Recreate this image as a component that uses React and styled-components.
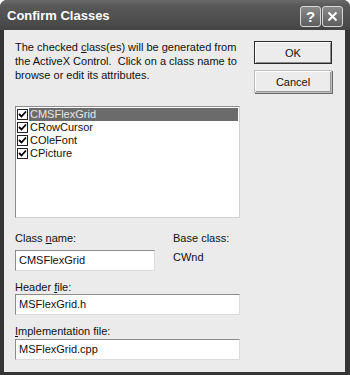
import React from "react";
import styled, { createGlobalStyle } from "styled-components";

const Global = createGlobalStyle`
  html, body { margin: 0; padding: 0; background: #ffffff; }
  body { font-family: "Liberation Sans", Arial, sans-serif; }
`;

const Window = styled.div`
  width: 350px;
  height: 375px;
  box-sizing: border-box;
  display: flex;
  flex-direction: column;
  background: #353535;
  border-radius: 7px 7px 0 0;
  overflow: hidden;
`;

const TitleBar = styled.div`
  height: 30px;
  flex: none;
  display: flex;
  align-items: center;
  padding: 0 7px 0 7px;
  background: linear-gradient(#6a6a6a 0%, #585858 20%, #4d4d4d 70%, #444 100%);
`;

const Title = styled.div`
  color: #ffffff;
  font: bold 13px "Liberation Sans", Arial, sans-serif;
  margin-top: 1px;
`;

const TitleButtons = styled.div`
  margin-left: auto;
  display: flex;
  gap: 1px;
  margin-top: 3px;
`;

const CapButton = styled.div`
  width: 21px;
  height: 21px;
  box-sizing: border-box;
  border: 1px solid #d8d8d8;
  border-radius: 3px;
  background: linear-gradient(#8a8a8a, #5e5e5e);
  display: flex;
  align-items: center;
  justify-content: center;
  color: #fff;
  font: bold 15px "Liberation Sans", Arial, sans-serif;
`;

const Body = styled.div`
  flex: 1;
  margin: 0 5px 3px 4px;
  background: #ebebeb;
  padding: 10px 0 0 11px;
  display: flex;
  font: 11px "Liberation Sans", Arial, sans-serif;
  color: #111;
`;

const LeftCol = styled.div`
  width: 225px;
  display: flex;
  flex-direction: column;
`;

const RightCol = styled.div`
  margin-left: 14px;
  width: 78px;
  display: flex;
  flex-direction: column;
  gap: 6px;
  padding-top: 1px;
`;

const Para = styled.p`
  margin: 0;
  line-height: 14px;
  white-space: nowrap;
`;

const ListBox = styled.div`
  margin-top: 24px;
  height: 112px;
  box-sizing: border-box;
  background: #fff;
  border: 1px solid #8c8c8c;
  border-right-color: #d0d0d0;
  border-bottom-color: #d0d0d0;
  padding: 1px 1px 0 0;
`;

const Item = styled.div`
  height: 13px;
  display: flex;
  align-items: center;
`;

const Check = styled.div`
  width: 11px;
  height: 11px;
  box-sizing: border-box;
  border: 1px solid #222;
  background: #fff;
  margin: 0 1px 0 1px;
  display: flex;
  align-items: center;
  justify-content: center;
`;

const ItemText = styled.div`
  flex: 1;
  height: 13px;
  line-height: 13px;
  padding-left: 1px;
  background: ${(p) => (p.$selected ? "#6b6b6b" : "transparent")};
  color: ${(p) => (p.$selected ? "#e6e6e6" : "#111")};
`;

const Label = styled.div`
  line-height: 14px;
  margin-top: ${(p) => p.$mt || 0}px;
`;

const FieldRow = styled.div`
  display: flex;
  margin-top: 13px;
`;

const FieldCol = styled.div`
  display: flex;
  flex-direction: column;
  width: ${(p) => p.$w}px;
`;

const Input = styled.div`
  margin-top: ${(p) => p.$mt || 0}px;
  height: 21px;
  width: ${(p) => p.$w}px;
  box-sizing: border-box;
  background: #fff;
  border: 1px solid #8c8c8c;
  border-right-color: #dcdcdc;
  border-bottom-color: #dcdcdc;
  padding: 0 3px;
  line-height: 19px;
`;

const BaseCol = styled.div`
  margin-left: 18px;
  display: flex;
  flex-direction: column;
`;

const Static = styled.div`
  margin-top: 3px;
  line-height: 19px;
`;

const Button = styled.div`
  height: 23px;
  box-sizing: border-box;
  display: flex;
  align-items: center;
  justify-content: center;
  background: #ececec;
  border: 1px solid ${(p) => (p.$default ? "#2a2a2a" : "#bdbdbd")};
  box-shadow: ${(p) =>
    p.$default
      ? "inset 1px 1px 0 #fff, inset -1px -1px 0 #8a8a8a"
      : "inset 1px 1px 0 #fff, inset -1px -1px 0 #9a9a9a, 1px 1px 0 #6a6a6a"};
  color: #111;
`;

const CheckMark = () => (
  <svg width="9" height="9" viewBox="0 0 9 9">
    <path d="M1 4 L3.5 6.5 L8 1.5" stroke="#000" strokeWidth="1.8" fill="none" />
  </svg>
);

const items = ["CMSFlexGrid", "CRowCursor", "COleFont", "CPicture"];

export default function App() {
  return (
    <>
      <Global />
      <Window>
        <TitleBar>
          <Title>Confirm Classes</Title>
          <TitleButtons>
            <CapButton>?</CapButton>
            <CapButton>
              <svg width="11" height="11" viewBox="0 0 11 11">
                <path d="M1.5 1.5 L9.5 9.5 M9.5 1.5 L1.5 9.5" stroke="#fff" strokeWidth="2" />
              </svg>
            </CapButton>
          </TitleButtons>
        </TitleBar>
        <Body>
          <LeftCol>
            <Para>
              The checked <u>c</u>lass(es) will be generated from
              <br />
              the ActiveX Control.&nbsp; Click on a class name to
              <br />
              browse or edit its attributes.
            </Para>
            <ListBox>
              {items.map((it, i) => (
                <Item key={it}>
                  <Check>
                    <CheckMark />
                  </Check>
                  <ItemText $selected={i === 0}>{it}</ItemText>
                </Item>
              ))}
            </ListBox>
            <FieldRow>
              <FieldCol $w={140}>
                <Label>
                  Class <u>n</u>ame:
                </Label>
                <Input $w={140} $mt={5}>CMSFlexGrid</Input>
              </FieldCol>
              <BaseCol>
                <Label>Base class:</Label>
                <Static>CWnd</Static>
              </BaseCol>
            </FieldRow>
            <Label $mt={9}>
              Header <u>f</u>ile:
            </Label>
            <Input $w={225}>MSFlexGrid.h</Input>
            <Label $mt={9}>
              <u>I</u>mplementation file:
            </Label>
            <Input $w={225} $mt={1}>MSFlexGrid.cpp</Input>
          </LeftCol>
          <RightCol>
            <Button $default>OK</Button>
            <Button>Cancel</Button>
          </RightCol>
        </Body>
      </Window>
    </>
  );
}
